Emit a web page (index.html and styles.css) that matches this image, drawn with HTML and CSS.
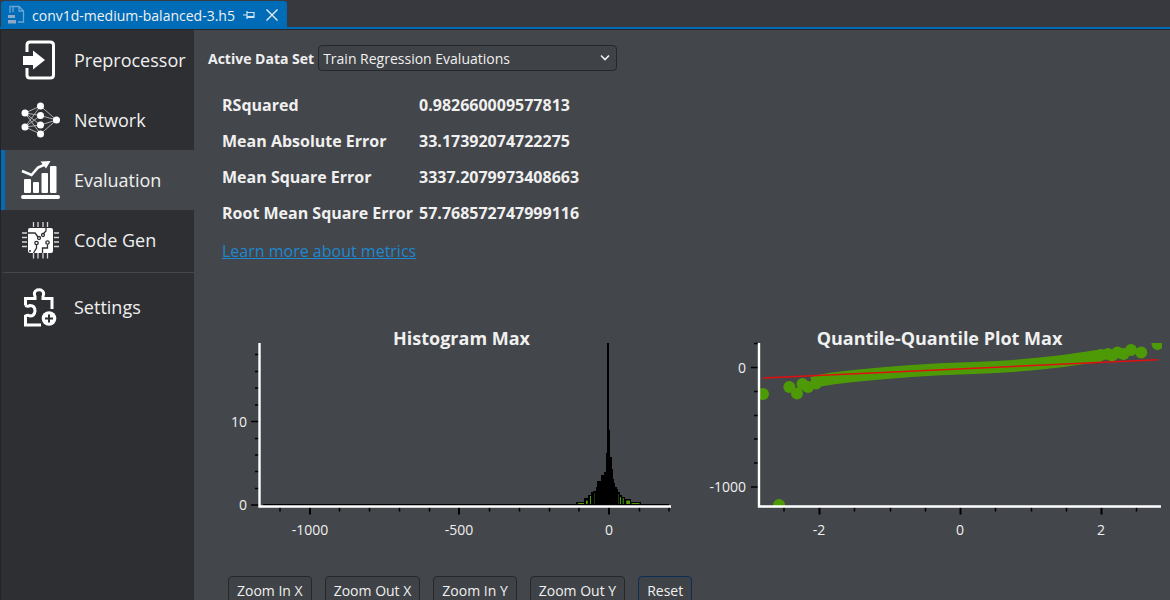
FILE: index.html
```html
<!DOCTYPE html>
<html lang="en">
<head>
    <meta charset="UTF-8">
    <meta name="viewport" content="width=device-width, initial-scale=1.0">
    <title>conv1d-medium-balanced-3.h5</title>
    <link rel="stylesheet" href="styles.css">
</head>
<body>
    <header class="tab-bar">
        <div class="tab">
            <svg class="file-icon" width="18" height="20" viewBox="0 0 18 20" fill="none" stroke="#6aa5d4" stroke-width="1.3">
                <path d="M3 8V1.500H12L16.500 6V17H11M12 1.500V6H16.500M6 1.500V7"/>
                <path d="M1 10H8V13H1ZM1 15H9V18.500H1Z" fill="#8fa9c4" stroke="none"/>
            </svg>
            <span class="tab-name">conv1d-medium-balanced-3.h5</span>
            <button class="tab-btn" aria-label="Pin tab">
                <svg width="14" height="14" viewBox="0 0 14 14" fill="none" stroke="#cfe3f4" stroke-width="1.200">
                    <path d="M1 7H5M5 3V11M5 4.500H12V9.500H5M5 8.500H12"/>
                </svg>
            </button>
            <button class="tab-btn" aria-label="Close tab">
                <svg width="14" height="14" viewBox="0 0 14 14" fill="none" stroke="#e6f0f9" stroke-width="1.400">
                    <path d="M1.500 1.500L12.500 12.500M12.500 1.500L1.500 12.500"/>
                </svg>
            </button>
        </div>
    </header>

    <div class="layout">
        <nav class="sidebar">
            <a class="nav-item" href="#preprocessor">
                <svg width="40" height="40" viewBox="0 0 40 40" fill="none" stroke="#fff" stroke-width="3">
                    <path d="M6 12V5Q6 2 9 2H29Q32.500 2 32.500 5V35Q32.500 38 29 38H9Q6 38 6 35V28"/>
                    <path d="M2 16H12V10.500L24 20L12 29.500V25H2Z" fill="#fff" stroke="none"/>
                </svg>
                <span>Preprocessor</span>
            </a>
            <a class="nav-item" href="#network">
                <svg width="40" height="40" viewBox="0 0 40 40">
                    <path d="M4 13L19.500 6M4 13L19.500 15.500M4 13L19.500 25M4 13L19.500 34M4 27L19.500 6M4 27L19.500 15.500M4 27L19.500 25M4 27L19.500 34M19.500 6L35.500 20M19.500 15.500L35.500 20M19.500 25L35.500 20M19.500 34L35.500 20" stroke="#b9babc" stroke-width="0.900"/>
                    <g fill="#fff">
                        <circle cx="4" cy="13" r="3.500"/>
                        <circle cx="4" cy="27" r="3.500"/>
                        <circle cx="19.500" cy="6" r="3.500"/>
                        <circle cx="19.500" cy="15.500" r="3.500"/>
                        <circle cx="19.500" cy="25" r="3.500"/>
                        <circle cx="19.500" cy="34" r="3.500"/>
                        <circle cx="35.500" cy="20" r="3.500"/>
                    </g>
                </svg>
                <span>Network</span>
            </a>
            <a class="nav-item active" href="#evaluation">
                <svg width="40" height="40" viewBox="0 0 40 40" fill="#fff">
                    <rect x="3" y="19" width="7" height="14" rx="1"/>
                    <rect x="12" y="22" width="6" height="11" rx="1"/>
                    <rect x="20.500" y="13" width="6.500" height="20" rx="1"/>
                    <rect x="29" y="6" width="6.500" height="27" rx="1"/>
                    <rect x="0" y="35" width="39" height="4" rx="2"/>
                    <path d="M1 11L10.500 15L17 7.500L24 4.500" fill="none" stroke="#fff" stroke-width="2.600"/>
                    <path d="M19.500 1.500L29.500 1L25 8.500Z"/>
                </svg>
                <span>Evaluation</span>
            </a>
            <a class="nav-item" href="#codegen">
                <svg width="40" height="40" viewBox="0 0 40 40">
                    <path d="M12.500 2V7M17 2V7M22 2V7M26.500 2V7M12.500 33V38.500M17 33V38.500M22 33V38.500M26.500 33V38.500M1 13H6M1 17.500H6M1 22H6M1 26.500H6M33 13H38M33 17.500H38M33 22H38M33 26.500H38" stroke="#d8d8da" stroke-width="1.300"/>
                    <rect x="7" y="8" width="25" height="25" rx="2" fill="#fff"/>
                    <g fill="none" stroke="#2e2f33" stroke-width="1.300">
                        <path d="M7 13H14L17 17M25 8V11L22 14M15.500 25V28L12.500 33M26.500 24.500V28H21.500V33"/>
                        <circle cx="18" cy="18" r="1.500"/>
                        <circle cx="22" cy="15" r="1.500"/>
                        <circle cx="15.500" cy="23" r="1.700"/>
                        <circle cx="26.500" cy="22.500" r="1.700"/>
                        <circle cx="9" cy="31" r="0.400"/>
                    </g>
                </svg>
                <span>Code Gen</span>
            </a>
            <a class="nav-item settings" href="#settings">
                <svg width="40" height="40" viewBox="0 0 40 40" fill="none" stroke="#fff" stroke-width="3">
                    <path d="M31 22V11.500H22V9.500Q24 5 20 3Q18 2.500 16 3Q12 5 14 9.500V11.500H4.500V18.500M4.500 18.500Q7 20 9 18.500Q14 18.500 14 24Q13.500 29 9 29Q7 27.500 4.500 29V38H20"/>
                    <circle cx="28" cy="31.500" r="7.300" fill="#fff" stroke="none"/>
                    <path d="M28 27.500V35.500M24 31.500H32" stroke="#2e2f33" stroke-width="2"/>
                </svg>
                <span>Settings</span>
            </a>
        </nav>

        <main class="content">
            <div class="dataset">
                <label for="dataset">Active Data Set</label>
                <div class="select-box">
                    <select id="dataset">
                        <option>Train Regression Evaluations</option>
                    </select>
                    <svg class="chevron" width="12" height="8" viewBox="0 0 12 8" fill="none" stroke="#f0f0f0" stroke-width="1.600">
                        <path d="M2 1.500L6 5.500L10 1.500"/>
                    </svg>
                </div>
            </div>

            <table class="metrics">
                <tr><th>RSquared</th><td>0.982660009577813</td></tr>
                <tr><th>Mean Absolute Error</th><td>33.17392074722275</td></tr>
                <tr><th>Mean Square Error</th><td>3337.2079973408663</td></tr>
                <tr><th>Root Mean Square Error</th><td>57.768572747999116</td></tr>
            </table>
            <a class="learn-more" href="#metrics">Learn more about metrics</a>

            <div class="charts">
                <svg class="chart" viewBox="0 0 488 230">
                    <path class="tick" d="M61 34.500H65M61 51.500H65M61 68H65M61 85H65M57 101.500H65M61 118.500H65M61 135H65M61 151.500H65M61 168.500H65M57 185H65"/>
                    <path class="tick" d="M86 187V191.500M145.500 187V191.500M175.500 187V191.500M205.500 187V191.500M235.500 187V191.500M295.500 187V191.500M325.500 187V191.500M355.500 187V191.500M385 187V191.500M445.500 187V191.500M475 187V191.500"/>
                    <path class="tick major" d="M116 187V194.500M265 187V194.500M415 187V194.500"/>

                    <!-- bins -->
                    <path d="M69 184H382V181.500H390.300V178.300H394V175H397.300V172.300H399V170.500H401.700V166.500H403.300V161H406.500V160H407.300V155H410V152H411.500V133H412.500V79H413.300V23.300H415V110H416V137H417.500V149H418.700V159H420V162.500H421V167H423V168.500H423.700V172.300H425.700V174.700H428V176.700H431.300V179.300H436.700V181.700H446.500V184H475V185.500H69Z" shape-rendering="crispEdges"/>
                    <path class="bin" d="M384 183H390V184H384ZM392 180.500H393.700V184H392ZM396 176H397V184H396ZM426 177H427V184H426ZM428.700 178H429.700V184H428.700ZM432.300 180.500H436V184H432.300ZM437.500 183H445.500V184H437.500Z"/>
                    <path class="bin dim" d="M400 173H401V184H400ZM424 174H425V184H424Z"/>

                    <path class="axis" d="M65.500 23V186.500H477"/>
                    <text class="chart-title" x="267.500" y="25">Histogram Max</text>
                    <g class="y-label">
                        <text x="53" y="107">10</text>
                        <text x="53" y="190">0</text>
                    </g>
                    <g class="x-label">
                        <text x="116" y="215">-1000</text>
                        <text x="265" y="215">-500</text>
                        <text x="415" y="215">0</text>
                    </g>
                </svg>

                <svg class="chart" viewBox="0 0 488 230">
                    <clipPath id="plot-area"><rect x="78" y="23" width="402" height="163"/></clipPath>
                    <path class="tick" d="M72 23.500H76M69 47.500H76M72 71.500H76M72 95.500H76M72 119H76M72 143H76M69 167H76"/>
                    <path class="tick" d="M102 187V191.500M172.500 187V191.500M208.500 187V191.500M243.500 187V191.500M313.500 187V191.500M349.500 187V191.500M384.500 187V191.500M454.500 187V191.500"/>
                    <path class="tick major" d="M137.500 187V194.500M278.500 187V194.500M419.500 187V194.500"/>
                    <g clip-path="url(#plot-area)">
                        <path class="band" d="M130 63L138 60.500L150 58.500Q200 52.500 258 49.300Q300 47.800 331 46Q365 43 381 41L419 35.500"/>
                        <g class="dots">
                            <circle cx="81" cy="74" r="6"/>
                            <circle cx="97" cy="185" r="6"/>
                            <circle cx="107.300" cy="67" r="6"/>
                            <circle cx="115" cy="73.500" r="6"/>
                            <circle cx="120.500" cy="64" r="6"/>
                            <circle cx="126" cy="67" r="6"/>
                            <circle cx="134" cy="63.500" r="6"/>
                            <circle cx="419" cy="35" r="6"/>
                            <circle cx="426" cy="34" r="6"/>
                            <circle cx="430" cy="35.500" r="6"/>
                            <circle cx="435.500" cy="32.500" r="6"/>
                            <circle cx="441.500" cy="34" r="6"/>
                            <circle cx="449" cy="30" r="6"/>
                            <circle cx="459.300" cy="32.500" r="6"/>
                            <circle cx="475.500" cy="24" r="6"/>
                        </g>
                        <path class="fit" d="M81 58L476 39.700"/>
                    </g>
                    <path class="axis" d="M77 23V186.500H479"/>
                    <text class="chart-title" x="257.500" y="25">Quantile-Quantile Plot Max</text>
                    <g class="y-label">
                        <text x="64" y="53">0</text>
                        <text x="64" y="172">-1000</text>
                    </g>
                    <g class="x-label">
                        <text x="137" y="215">-2</text>
                        <text x="278" y="215">0</text>
                        <text x="419" y="215">2</text>
                    </g>
                </svg>
            </div>

            <div class="zoom-controls">
                <button>Zoom In X</button>
                <button>Zoom Out X</button>
                <button>Zoom In Y</button>
                <button>Zoom Out Y</button>
                <button class="reset">Reset</button>
            </div>
        </main>
    </div>
</body>
</html>
```
FILE: styles.css
```css
* {
    box-sizing: border-box;
}
body {
    margin: 0;
    height: 100vh;
    overflow: hidden;
    display: flex;
    flex-direction: column;
    font-family: "Open Sans", "Noto Sans", sans-serif;
    font-size: 14px;
    color: #f0f0f0;
    background: #43464a;
}
button, select {
    font: inherit;
    color: inherit;
}

/* document tab */
.tab-bar {
    display: flex;
    flex-shrink: 0;
    padding: 1px 1px 0;
    background: #37393e;
    border-bottom: 2px solid #006cb8;
}
.tab {
    display: flex;
    align-items: center;
    height: 26px;
    padding: 2px 8px 0 6px;
    background: #006cb8;
    border-radius: 3px 3px 0 0;
}
.tab-name {
    margin: 0 5px 0 7px;
    font-size: 14px;
}
.tab-btn {
    display: flex;
    padding: 0;
    margin-left: 2px;
    border: none;
    background: none;
}
.tab-btn + .tab-btn {
    margin-left: 9px;
}

.layout {
    display: flex;
    flex: 1;
    min-height: 0;
    border-top: 1px solid #27282b;
}

/* sidebar */
.sidebar {
    flex: 0 0 194px;
    background: #2e2f33;
    border-left: 1px solid #232427;
}
.nav-item {
    display: flex;
    align-items: center;
    gap: 13px;
    height: 60px;
    padding-left: 16px;
    border-left: 4px solid transparent;
    color: #f0f0f0;
    font-size: 18px;
    text-decoration: none;
}
.nav-item.active {
    background: #43464a;
    border-left-color: #006cb8;
}
.nav-item.settings {
    height: 68px;
    margin-top: 2px;
    border-top: 1px solid #46484c;
}

/* main panel */
.content {
    flex: 1;
    min-width: 0;
}
.dataset {
    display: flex;
    align-items: center;
    gap: 4px;
    padding: 15px 14px 0;
}
.dataset label {
    font-weight: bold;
}
.select-box {
    position: relative;
    width: 299px;
}
.select-box select {
    appearance: none;
    display: block;
    width: 100%;
    height: 26px;
    padding: 0 4px;
    background: #3f4246;
    border: 1px solid #26272a;
    border-radius: 4px;
}
.chevron {
    position: absolute;
    right: 6px;
    top: 9px;
    pointer-events: none;
}
.metrics {
    margin: 16px 0 0 28px;
    border-collapse: collapse;
    font-size: 16px;
    font-weight: bold;
}
.metrics tr {
    height: 36px;
}
.metrics th,
.metrics td {
    padding: 0;
    text-align: left;
}
.metrics th {
    padding-right: 6px;
}
.learn-more {
    display: block;
    width: max-content;
    margin: 8px 0 0 28px;
    font-size: 16px;
    line-height: 24px;
    color: #1e88d0;
}

/* charts */
.charts {
    display: grid;
    grid-template-columns: 1fr 1fr;
    margin-top: 57px;
}
.chart {
    width: 100%;
}
.chart text {
    fill: #f0f0f0;
}
.chart .chart-title {
    font-size: 18px;
    font-weight: bold;
    text-anchor: middle;
}
.x-label {
    text-anchor: middle;
}
.y-label {
    text-anchor: end;
}
.tick {
    stroke: #000;
    stroke-width: 1.5;
}
.tick.major {
    stroke-width: 2;
}
.axis {
    fill: none;
    stroke: #fff;
    stroke-width: 2.4;
}
.bin {
    fill: #4e9a06;
}
.bin.dim {
    fill: #1c3802;
}
.band {
    fill: none;
    stroke: #4e9a06;
    stroke-width: 12;
}
.dots {
    fill: #4e9a06;
}
.fit {
    stroke: #e01010;
    stroke-width: 1.5;
}

.zoom-controls {
    display: flex;
    gap: 13px;
    padding: 26px 34px;
}
.zoom-controls button {
    height: 28px;
    padding: 0 8px;
    background: #3f4246;
    border: 1px solid #26272a;
    border-radius: 4px;
}
.zoom-controls .reset {
    border-color: #0a2f55;
}
```
